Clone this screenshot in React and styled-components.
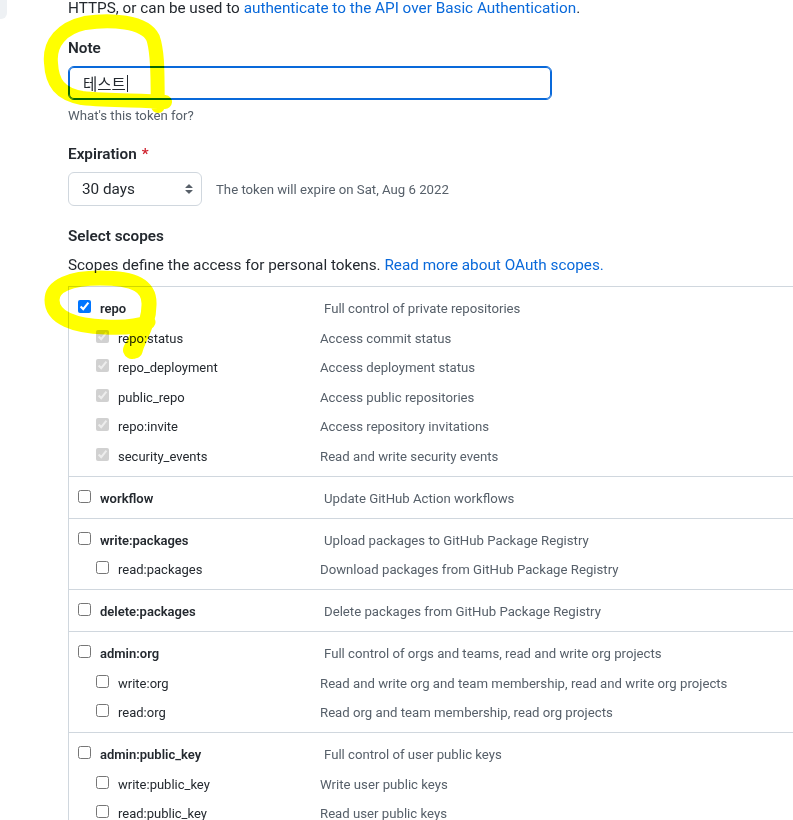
import React from "react";
import styled, { createGlobalStyle } from "styled-components";

const GlobalStyle = createGlobalStyle`
  html, body { margin: 0; padding: 0; background: #ffffff; }
  body {
    overflow: hidden;
    font-family: Roboto, "Noto Sans CJK KR", sans-serif;
    color: #24292f;
  }
`;

const Page = styled.div`
  position: relative;
  display: flex;
  width: 793px;
  height: 820px;
  overflow: hidden;
`;

const Sidebar = styled.aside`
  flex: 0 0 68px;
`;

const NavActive = styled.div`
  width: 7px;
  height: 19px;
  background: #eef1f4;
  border-bottom-right-radius: 6px;
`;

const Main = styled.main`
  flex: 0 0 760px;
  display: block;
`;

const Para = styled.p`
  margin: ${(p) => p.$mt}px 0 0;
  font-size: 15.3px;
  line-height: 23px;
  color: #24292f;
  white-space: nowrap;
`;

const Link = styled.a`
  color: #0969da;
  text-decoration: none;
`;

const FieldLabel = styled.label`
  display: block;
  margin-top: ${(p) => p.$mt}px;
  font-size: 15.3px;
  font-weight: 600;
  line-height: 23px;
`;

const Required = styled.span`
  color: #cf222e;
  margin-left: 5px;
`;

const TextField = styled.div`
  box-sizing: border-box;
  display: flex;
  align-items: center;
  width: 484px;
  height: 34px;
  margin-top: 6px;
  padding: 0 12px 0 14px;
  border: 1px solid #0969da;
  border-radius: 6px;
  box-shadow: inset 0 0 0 1px #0969da;
  font-family: "Noto Sans CJK KR", sans-serif;
  font-size: 15.5px;
  color: #24292f;
`;

const Caret = styled.span`
  display: inline-block;
  width: 1px;
  height: 17px;
  margin-left: 1px;
  background: #24292f;
`;

const Note = styled.p`
  margin: 6px 0 0;
  font-size: 13.2px;
  line-height: 20px;
  color: #57606a;
`;

const ExpRow = styled.div`
  display: flex;
  align-items: center;
  gap: 14px;
  margin-top: 6px;
`;

const SelectBox = styled.div`
  box-sizing: border-box;
  display: flex;
  align-items: center;
  justify-content: space-between;
  width: 134px;
  height: 34px;
  padding: 0 4px 0 13px;
  border: 1px solid #d0d7de;
  border-radius: 6px;
  background: #ffffff;
  font-size: 15.3px;
  color: #24292f;
`;

const Hint = styled.span`
  font-size: 13.2px;
  color: #57606a;
`;

const Scopes = styled.div`
  margin-top: 9px;
  border-top: 1px solid #d0d7de;
  border-left: 1px solid #d0d7de;
`;

const Group = styled.div`
  display: flex;
  flex-direction: column;
  gap: 1.5px;
  padding: 8px 0 5px;
  border-bottom: 1px solid #d0d7de;
`;

const Row = styled.div`
  display: grid;
  grid-template-columns: 251px 1fr;
  height: 28px;
`;

const ScopeLabel = styled.label`
  display: flex;
  align-items: flex-start;
  gap: 9px;
  padding-left: ${(p) => (p.$sub ? 27 : 9)}px;
  font-size: 13px;
  line-height: 28px;
  font-weight: ${(p) => (p.$sub ? 400 : 600)};
  color: #24292f;
  white-space: nowrap;
`;

const Check = styled.input.attrs({ type: "checkbox" })`
  flex: none;
  width: 13px;
  height: 13px;
  margin: 5px 0 0;
`;

const Desc = styled.span`
  padding-left: ${(p) => (p.$sub ? 0 : 4)}px;
  font-size: 13.2px;
  line-height: 28px;
  color: #57606a;
  white-space: nowrap;
`;

const Marks = styled.svg`
  position: absolute;
  left: 0;
  top: 0;
  width: 793px;
  height: 820px;
  pointer-events: none;
  mix-blend-mode: multiply;
`;

const groups = [
  [
    { name: "repo", desc: "Full control of private repositories", checked: true },
    { name: "repo:status", desc: "Access commit status", sub: true, checked: true, disabled: true },
    { name: "repo_deployment", desc: "Access deployment status", sub: true, checked: true, disabled: true },
    { name: "public_repo", desc: "Access public repositories", sub: true, checked: true, disabled: true },
    { name: "repo:invite", desc: "Access repository invitations", sub: true, checked: true, disabled: true },
    { name: "security_events", desc: "Read and write security events", sub: true, checked: true, disabled: true },
  ],
  [{ name: "workflow", desc: "Update GitHub Action workflows" }],
  [
    { name: "write:packages", desc: "Upload packages to GitHub Package Registry" },
    { name: "read:packages", desc: "Download packages from GitHub Package Registry", sub: true },
  ],
  [{ name: "delete:packages", desc: "Delete packages from GitHub Package Registry" }],
  [
    { name: "admin:org", desc: "Full control of orgs and teams, read and write org projects" },
    { name: "write:org", desc: "Read and write org and team membership, read and write org projects", sub: true },
    { name: "read:org", desc: "Read org and team membership, read org projects", sub: true },
  ],
  [
    { name: "admin:public_key", desc: "Full control of user public keys" },
    { name: "write:public_key", desc: "Write user public keys", sub: true },
    { name: "read:public_key", desc: "Read user public keys", sub: true },
  ],
];

function UpDown() {
  return (
    <svg width="16" height="16" viewBox="0 0 16 16" aria-hidden="true">
      <path
        fill="#586069"
        d="M4.427 9.427l3.396 3.396a.25.25 0 00.354 0l3.396-3.396A.25.25 0 0011.396 9H4.604a.25.25 0 00-.177.427zM4.427 6.573l3.396-3.396a.25.25 0 01.354 0l3.396 3.396A.25.25 0 0111.396 7H4.604a.25.25 0 01-.177-.427z"
      />
    </svg>
  );
}

export default function App() {
  return (
    <>
      <GlobalStyle />
      <Page>
        <Sidebar>
          <NavActive />
        </Sidebar>
        <Main>
          <Para $mt={-3}>
            HTTPS, or can be used to{" "}
            <Link href="#">authenticate to the API over Basic Authentication</Link>.
          </Para>

          <FieldLabel $mt={17}>Note</FieldLabel>
          <TextField role="textbox" aria-label="Note">
            테스트
            <Caret />
          </TextField>
          <Note>What's this token for?</Note>

          <FieldLabel $mt={17}>
            Expiration<Required>*</Required>
          </FieldLabel>
          <ExpRow>
            <SelectBox role="combobox" aria-label="Expiration">
              30 days
              <UpDown />
            </SelectBox>
            <Hint>The token will expire on Sat, Aug 6 2022</Hint>
          </ExpRow>

          <FieldLabel $mt={19}>Select scopes</FieldLabel>
          <Para $mt={6}>
            Scopes define the access for personal tokens.{" "}
            <Link href="#">Read more about OAuth scopes.</Link>
          </Para>

          <Scopes>
            {groups.map((g, gi) => (
              <Group key={gi}>
                {g.map((s) => (
                  <Row key={s.name}>
                    <ScopeLabel $sub={s.sub}>
                      <Check
                        defaultChecked={!!s.checked}
                        disabled={!!s.disabled}
                      />
                      {s.name}
                    </ScopeLabel>
                    <Desc $sub={s.sub}>{s.desc}</Desc>
                  </Row>
                ))}
              </Group>
            ))}
          </Scopes>
        </Main>

        <Marks viewBox="0 0 793 820" aria-hidden="true">
          <path
            d="M158 106 C157 85 159 55 153 38 C145 21 110 19 85 23 C62 28 49 43 51 63 C52 83 60 94 82 98 C110 101 140 100 165 102"
            fill="none"
            stroke="#ffff00"
            strokeWidth="14"
            strokeLinecap="round"
            strokeLinejoin="round"
          />
          <path
            d="M135 351 C138 338 149 325 149 305 C150 286 135 278 100 278 C70 278 52 286 52 300 C52 318 75 326 105 327 C125 328 140 326 148 322"
            fill="none"
            stroke="#ffff00"
            strokeWidth="15"
            strokeLinecap="round"
            strokeLinejoin="round"
          />
          <path
            d="M132 350 L140 334"
            fill="none"
            stroke="#ffff00"
            strokeWidth="18"
            strokeLinecap="round"
          />
        </Marks>
      </Page>
    </>
  );
}
